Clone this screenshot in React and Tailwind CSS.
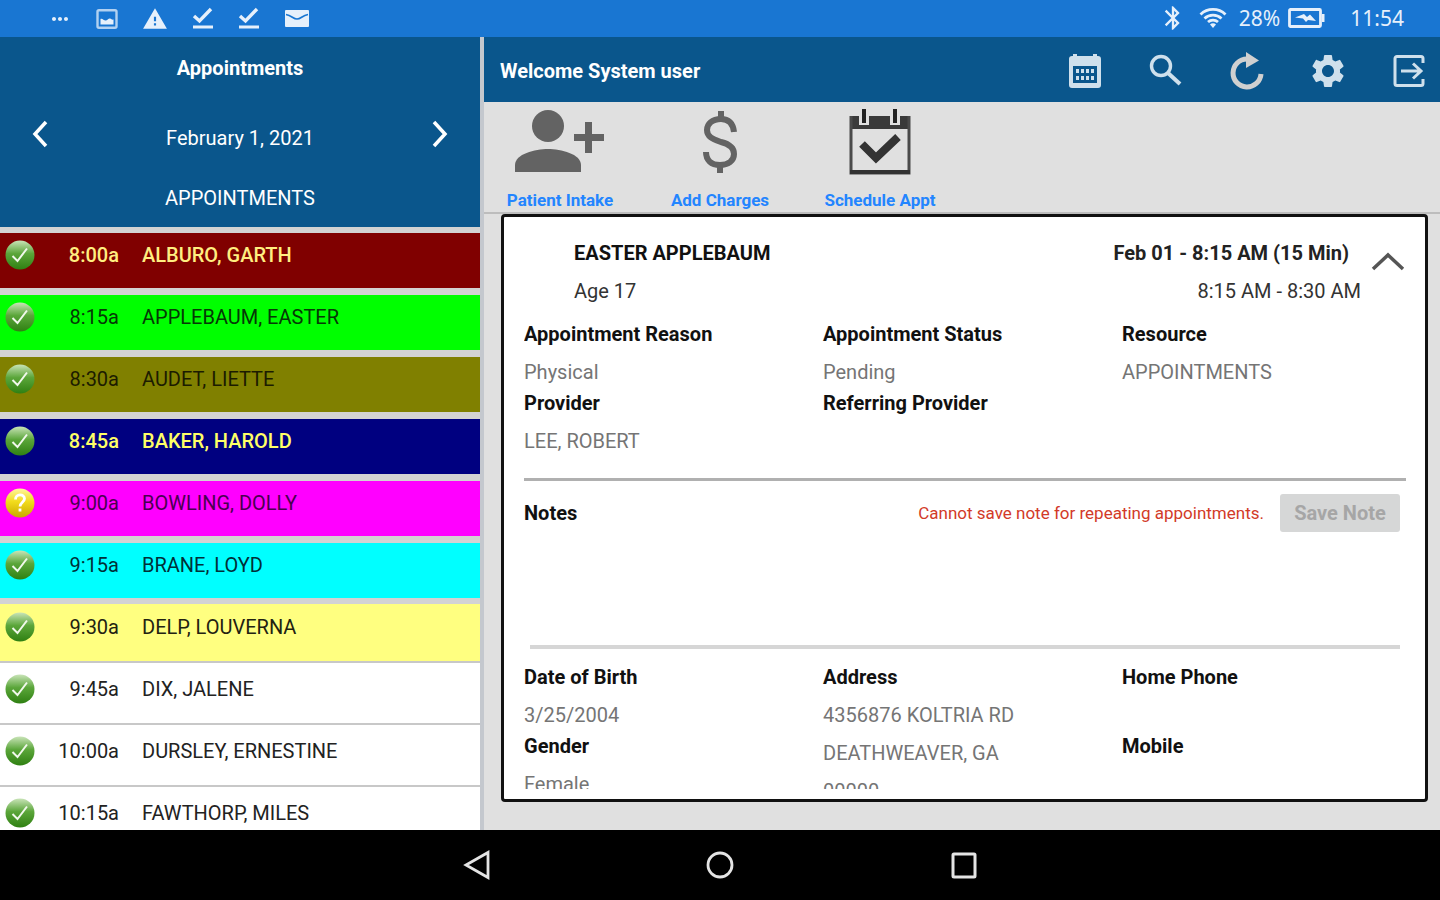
import React from "react";
import { MdBluetooth, MdSettings, MdWarning, MdMoreHoriz } from "react-icons/md";

const citas = [
    { hora: "8:00a", nombre: "ALBURO, GARTH", color: "bg-[#800000] text-[#ffee80] font-medium" },
    { hora: "8:15a", nombre: "APPLEBAUM, EASTER", color: "bg-[#00ff00] text-[#063806]" },
    { hora: "8:30a", nombre: "AUDET, LIETTE", color: "bg-[#808000] text-[#1c1c00]" },
    { hora: "8:45a", nombre: "BAKER, HAROLD", color: "bg-[#000080] text-[#ffff66] font-medium" },
    { hora: "9:00a", nombre: "BOWLING, DOLLY", color: "bg-[#ff00ff] text-[#4a0050]", pendiente: true },
    { hora: "9:15a", nombre: "BRANE, LOYD", color: "bg-[#00ffff] text-[#003038]" },
    { hora: "9:30a", nombre: "DELP, LOUVERNA", color: "bg-[#ffff80] text-[#222211]" },
    { hora: "9:45a", nombre: "DIX, JALENE", color: "bg-white text-[#222222]" },
    { hora: "10:00a", nombre: "DURSLEY, ERNESTINE", color: "bg-white text-[#222222]" },
    { hora: "10:15a", nombre: "FAWTHORP, MILES", color: "bg-white text-[#222222]" },
];

const detalleCita = [
    [
        { label: "Appointment Reason", lineas: ["Physical"] },
        { label: "Provider", lineas: ["LEE, ROBERT"] },
    ],
    [
        { label: "Appointment Status", lineas: ["Pending"] },
        { label: "Referring Provider", lineas: [] },
    ],
    [{ label: "Resource", lineas: ["APPOINTMENTS"] }],
];

const detallePaciente = [
    [
        { label: "Date of Birth", lineas: ["3/25/2004"] },
        { label: "Gender", lineas: ["Female"] },
    ],
    [{ label: "Address", lineas: ["4356876 KOLTRIA RD", "DEATHWEAVER, GA", "00000"] }],
    [
        { label: "Home Phone", lineas: [] },
        { label: "Mobile", lineas: [] },
    ],
];

function IconoDescarga() {
    return (
        <svg viewBox="0 0 22 24" className="h-6 w-[22px]" fill="none" stroke="currentColor">
            <path d="M2 9l5.500 5L19 2" strokeWidth="3.400" />
            <path d="M1 20h20" strokeWidth="3" />
        </svg>
    );
}

function BarraEstado() {
    return (
        <div className="flex h-[37px] shrink-0 items-center justify-between bg-[#1976d2] pl-12 pr-9 text-[#e6f0fb]">
            <div className="flex items-center gap-6">
                <MdMoreHoriz className="size-6" />
                <svg viewBox="0 0 22 20" className="h-5 w-[22px]" fill="none">
                    <rect x="1.500" y="1.200" width="19" height="17.600" rx="1.500" stroke="currentColor" strokeOpacity="0.75" strokeWidth="2.400" />
                    <path d="M4.500 10c2-1 3.500 2 5.500 1.500s2.500-2.500 4-2 2 1.500 3.500 1v5h-13z" fill="currentColor" />
                </svg>
                <MdWarning className="size-[26px]" />
                <IconoDescarga />
                <IconoDescarga />
                <svg viewBox="0 0 26 20" className="h-5 w-[26px]" fill="none">
                    <rect x="1" y="1" width="24" height="17" rx="1" fill="currentColor" />
                    <path d="M2 5.500c6 1 7 4.500 11 4.500s5-3.500 11-4.500" stroke="#1976d2" strokeWidth="1.600" />
                </svg>
            </div>
            <div className="flex items-center pb-px font-['Noto_Sans',sans-serif] text-[21px] leading-6">
                <MdBluetooth className="mr-3 size-7" />
                <svg viewBox="0 0 28 22" className="mr-3 h-[22px] w-7" fill="none" stroke="currentColor" strokeWidth="2.800">
                    <path d="M1.500 7.500a18 18 0 0 1 25 0" />
                    <path d="M5.500 11.500a12.500 12.500 0 0 1 17 0" />
                    <path d="M9 15a7.500 7.500 0 0 1 10 0" />
                    <path d="M11 17.500a4 4 0 0 1 6 0L14 21z" fill="currentColor" stroke="none" />
                </svg>
                <span>28%</span>
                <svg viewBox="0 0 38 20" className="ml-2 mr-6 h-5 w-[38px]" fill="none">
                    <rect x="1.500" y="1.500" width="31" height="17" rx="1" stroke="currentColor" strokeWidth="2.800" />
                    <path d="M34 6h2.500v8H34z" fill="currentColor" />
                    <path d="M7 9.500l9-3.500 3 3 3-2.500L28 13l-8-1-2 2-3-3.500z" fill="currentColor" />
                </svg>
                <span>11:54</span>
            </div>
        </div>
    );
}

function IconoEstado({ id, pendiente }) {
    return (
        <svg viewBox="0 0 30 30" className="size-[30px] shrink-0">
            <defs>
                <linearGradient id={id} x1="0" y1="0" x2="0" y2="1">
                    <stop offset="0" stopColor={pendiente ? "#fff6a0" : "#c9e4b8"} />
                    <stop offset="0.45" stopColor={pendiente ? "#f2dc1c" : "#5ba63a"} />
                    <stop offset="1" stopColor={pendiente ? "#c9a800" : "#2f8012"} />
                </linearGradient>
            </defs>
            <circle cx="15" cy="15" r="14.5" fill={`url(#${id})`} />
            {pendiente ? (
                <g fill="none" stroke="#ffffff" strokeWidth="2.800">
                    <path d="M10.500 11.500c0-6 9-6 9-.8 0 3.300-4.500 3.800-4.500 7.800" />
                    <path d="M15 20.500v3" />
                </g>
            ) : (
                <path d="M7.500 16l5 5L22 8.500" fill="none" stroke="#f1f8ec" strokeWidth="2" />
            )}
        </svg>
    );
}

function PanelCitas() {
    const borde = (i) => {
        if (i < 5) return "border-b-[7px] border-[#d3d3d3]";
        if (i === 5) return "border-b-[6px] border-[#d3d3d3]";
        return "border-b-2 border-[#c8c8c8]";
    };
    const alto = (i) => {
        if (i < 6) return "h-[55px] pt-[7px]";
        if (i === 6) return "h-[57px] pt-2";
        return "h-[60px] pt-[11px]";
    };

    return (
        <aside className="flex w-1/3 shrink-0 flex-col bg-[#d3d3d3]">
            <header className="mb-[6px] h-[190px] shrink-0 bg-[#0a568c] pt-4 text-center text-[20px] leading-[30px] text-white">
                <h1 className="font-bold">Appointments</h1>
                <div className="flex items-center justify-between px-7 pt-7">
                    <button aria-label="Previous day" className="flex h-[46px] w-6 items-center justify-center">
                        <svg viewBox="0 0 16 28" className="h-7 w-4" fill="none" stroke="currentColor" strokeWidth="3.500">
                            <path d="M14 2L3 14l11 12" />
                        </svg>
                    </button>
                    <p className="pt-2">February 1, 2021</p>
                    <button aria-label="Next day" className="flex h-[46px] w-6 items-center justify-center">
                        <svg viewBox="0 0 16 28" className="h-7 w-4" fill="none" stroke="currentColor" strokeWidth="3.500">
                            <path d="M2 2l11 12L2 26" />
                        </svg>
                    </button>
                </div>
                <p className="pt-[26px]">APPOINTMENTS</p>
            </header>
            <ul className="min-h-0 flex-1 overflow-hidden">
                {citas.map((cita, i) => (
                    <li key={cita.hora} className={borde(i)}>
                        <button className={`${cita.color} ${alto(i)} flex w-full items-start pl-[5px] text-left text-[20px] leading-[30px]`}>
                            <IconoEstado id={`estado-${i}`} pendiente={cita.pendiente} />
                            <span className="w-[84px] shrink-0 text-right">{cita.hora}</span>
                            <span className="pl-[23px]">{cita.nombre}</span>
                        </button>
                    </li>
                ))}
            </ul>
        </aside>
    );
}

function BarraTitulo() {
    return (
        <header className="flex h-[65px] shrink-0 items-center justify-between bg-[#0a568c] pl-4 pr-[13px] pt-[2px]">
            <h2 className="text-[20px] font-bold leading-[30px] text-white">Welcome System user</h2>
            <div className="flex items-center gap-[45px] text-[#cfe0ec]">
                <button aria-label="Calendar">
                    <svg viewBox="0 0 36 36" className="size-9">
                        <path
                            fillRule="evenodd"
                            fill="currentColor"
                            d="M6 1h4v2h16V1h4v2h1a3 3 0 0 1 3 3v26a3 3 0 0 1-3 3H5a3 3 0 0 1-3-3V6a3 3 0 0 1 3-3h1zM6 13v17h24V13z"
                        />
                        <path d="M9 18h18M9 25h18" stroke="currentColor" strokeWidth="4" strokeDasharray="3 2" />
                    </svg>
                </button>
                <button aria-label="Search">
                    <svg viewBox="0 0 36 36" className="size-9" fill="none" stroke="currentColor">
                        <circle cx="13" cy="13" r="9.500" strokeWidth="3.400" />
                        <path d="M20 20l12 11" strokeWidth="4" />
                    </svg>
                </button>
                <button aria-label="Refresh">
                    <svg viewBox="0 0 36 38" className="h-[38px] w-9 text-[#d0d0d0]">
                        <path d="M18 7a14 14 0 1 0 14 15" fill="none" stroke="currentColor" strokeWidth="5" />
                        <path d="M17 0l13 8.500L17 16z" fill="currentColor" />
                    </svg>
                </button>
                <button aria-label="Settings">
                    <MdSettings className="-m-0.5 size-10" />
                </button>
                <button aria-label="Log out">
                    <svg viewBox="0 0 36 36" className="size-9" fill="none" stroke="currentColor" strokeWidth="3">
                        <path d="M32 10V5.500a2 2 0 0 0-2-2H6a2 2 0 0 0-2 2v25a2 2 0 0 0 2 2h24a2 2 0 0 0 2-2V26" />
                        <path d="M10 18h19M22 10.500l8 7.500-8 7.500" />
                    </svg>
                </button>
            </div>
        </header>
    );
}

function Acciones() {
    const boton = "flex w-[152px] flex-col items-center pt-[7px] text-[17px] font-bold leading-6 text-[#2385ff]";
    return (
        <nav className="flex h-[112px] shrink-0 items-start gap-2 border-b-2 border-[#bdbdbd] bg-[#e0e0e0]">
            <button className={boton}>
                <svg viewBox="0 0 90 66" className="mb-[13px] h-[66px] w-[90px]" fill="#636363">
                    <circle cx="33" cy="17" r="16" />
                    <path d="M0 63V56C0 45 20 40 33 40s33 5 33 16v7z" />
                    <path d="M70 13h7v12h12v7H77v12h-7V32H59v-7h11z" />
                </svg>
                Patient Intake
            </button>
            <button className={boton}>
                <svg viewBox="0 0 36 66" className="mb-[13px] h-[66px] w-9" fill="none" stroke="#636363" strokeWidth="6">
                    <path d="M32 23C31 14 26 10 19 10 10 10 5 15 5 21c0 7 6 9 14 12 8 2 13 5 13 12 0 7-6 11-14 11C9 56 4 51 4 43" />
                    <path d="M19 2v9M18 55v9" />
                </svg>
                Add Charges
            </button>
            <button className={boton}>
                <svg viewBox="0 0 64 66" className="mb-[13px] h-[66px] w-16" fill="none">
                    <path d="M2 7h60v13H2z" fill="#3a3a3a" />
                    <path d="M3 7v57h58V7" stroke="#4a4a4a" strokeWidth="3" />
                    <path d="M2 63h60" stroke="#333333" strokeWidth="4" />
                    <path d="M16 0v16M47 0v16" stroke="#e0e0e0" strokeWidth="10" />
                    <path d="M16 0v14M47 0v14" stroke="#222222" strokeWidth="4" />
                    <path d="M14 35l14 14 22-21" stroke="#333333" strokeWidth="8" />
                </svg>
                Schedule Appt
            </button>
        </nav>
    );
}

function Campos({ columnas }) {
    return (
        <div className="grid grid-cols-3 pr-1">
            {columnas.map((campos, i) => (
                <dl key={i}>
                    {campos.map((campo) => (
                        <div key={campo.label}>
                            <dt className="pb-[7px] font-bold leading-6 text-[#111111]">{campo.label}</dt>
                            <dd className="min-h-[38px] leading-[38px] text-[#757575]">
                                {campo.lineas.map((linea) => (
                                    <p key={linea}>{linea}</p>
                                ))}
                            </dd>
                        </div>
                    ))}
                </dl>
            ))}
        </div>
    );
}

function DetalleCita() {
    return (
        <section className="flex min-h-0 flex-1 rounded border-[3px] border-[#111111] bg-white pb-[10px] pl-5 pt-[17px] text-[20px]">
            <div className="min-h-0 flex-1 overflow-hidden">
                <div className="mb-3 flex items-start justify-between leading-[38px]">
                    <div className="pl-[50px]">
                        <h3 className="font-bold text-[#111111]">EASTER APPLEBAUM</h3>
                        <p className="text-[#333333]">Age 17</p>
                    </div>
                    <div className="flex">
                        <div className="text-right">
                            <p className="pr-3 font-bold text-[#222222]">Feb 01 - 8:15 AM (15 Min)</p>
                            <p className="text-[#333333]">8:15 AM - 8:30 AM</p>
                        </div>
                        <button aria-label="Collapse" className="flex h-[54px] w-16 items-center pl-[10px]">
                            <svg viewBox="0 0 34 20" className="h-5 w-[34px]" fill="none" stroke="#555555" strokeWidth="3.500">
                                <path d="M2 18L17 4l15 14" />
                            </svg>
                        </button>
                    </div>
                </div>
                <Campos columnas={detalleCita} />
                <div className="mr-[19px] mt-[18px] border-t-[3px] border-[#b0b0b0] pt-[13px]">
                    <div className="flex items-center">
                        <label htmlFor="notas" className="flex-1 font-bold leading-[30px] text-[#111111]">
                            Notes
                        </label>
                        <span className="pr-4 text-[17px] leading-6 text-[#d23a28]">Cannot save note for repeating appointments.</span>
                        <button
                            disabled
                            className="mr-[6px] h-[38px] w-[120px] rounded-[3px] bg-[#d6d7d7] text-[20px] font-bold leading-6 text-[#a6a6a6]"
                        >
                            Save Note
                        </button>
                    </div>
                    <div className="px-[6px] pt-3">
                        <textarea
                            id="notas"
                            readOnly
                            className="block h-[105px] w-full resize-none border-b-4 border-[#d6d6d6] leading-[30px] outline-none"
                        />
                    </div>
                </div>
                <div className="pt-4">
                    <Campos columnas={detallePaciente} />
                </div>
            </div>
        </section>
    );
}

function BarraNavegacion() {
    return (
        <nav className="flex h-[70px] shrink-0 items-center justify-center gap-[213px] bg-black text-[#e4e4e4]">
            <button aria-label="Back">
                <svg viewBox="0 0 30 30" className="size-[30px]" fill="none" stroke="currentColor" strokeWidth="2.800">
                    <path d="M26 2.500v25L4 15z" />
                </svg>
            </button>
            <button aria-label="Home">
                <svg viewBox="0 0 30 30" className="size-[30px]" fill="none" stroke="currentColor" strokeWidth="2.800">
                    <circle cx="15" cy="15" r="12" />
                </svg>
            </button>
            <button aria-label="Recent apps">
                <svg viewBox="0 0 30 30" className="size-[30px]" fill="none" stroke="currentColor" strokeWidth="3">
                    <rect x="5" y="4" width="22" height="23" rx="1" />
                </svg>
            </button>
        </nav>
    );
}

export default function App() {
    return (
        <div className="flex h-screen flex-col overflow-hidden bg-[#e0e0e0] font-['Roboto',sans-serif]">
            <BarraEstado />
            <div className="flex min-h-0 flex-1">
                <PanelCitas />
                <main className="flex min-w-0 flex-1 flex-col border-l-4 border-[#c4c8ce]">
                    <BarraTitulo />
                    <Acciones />
                    <div className="flex min-h-0 flex-1 flex-col pb-7 pl-[17px] pr-3">
                        <DetalleCita />
                    </div>
                </main>
            </div>
            <BarraNavegacion />
        </div>
    );
}
